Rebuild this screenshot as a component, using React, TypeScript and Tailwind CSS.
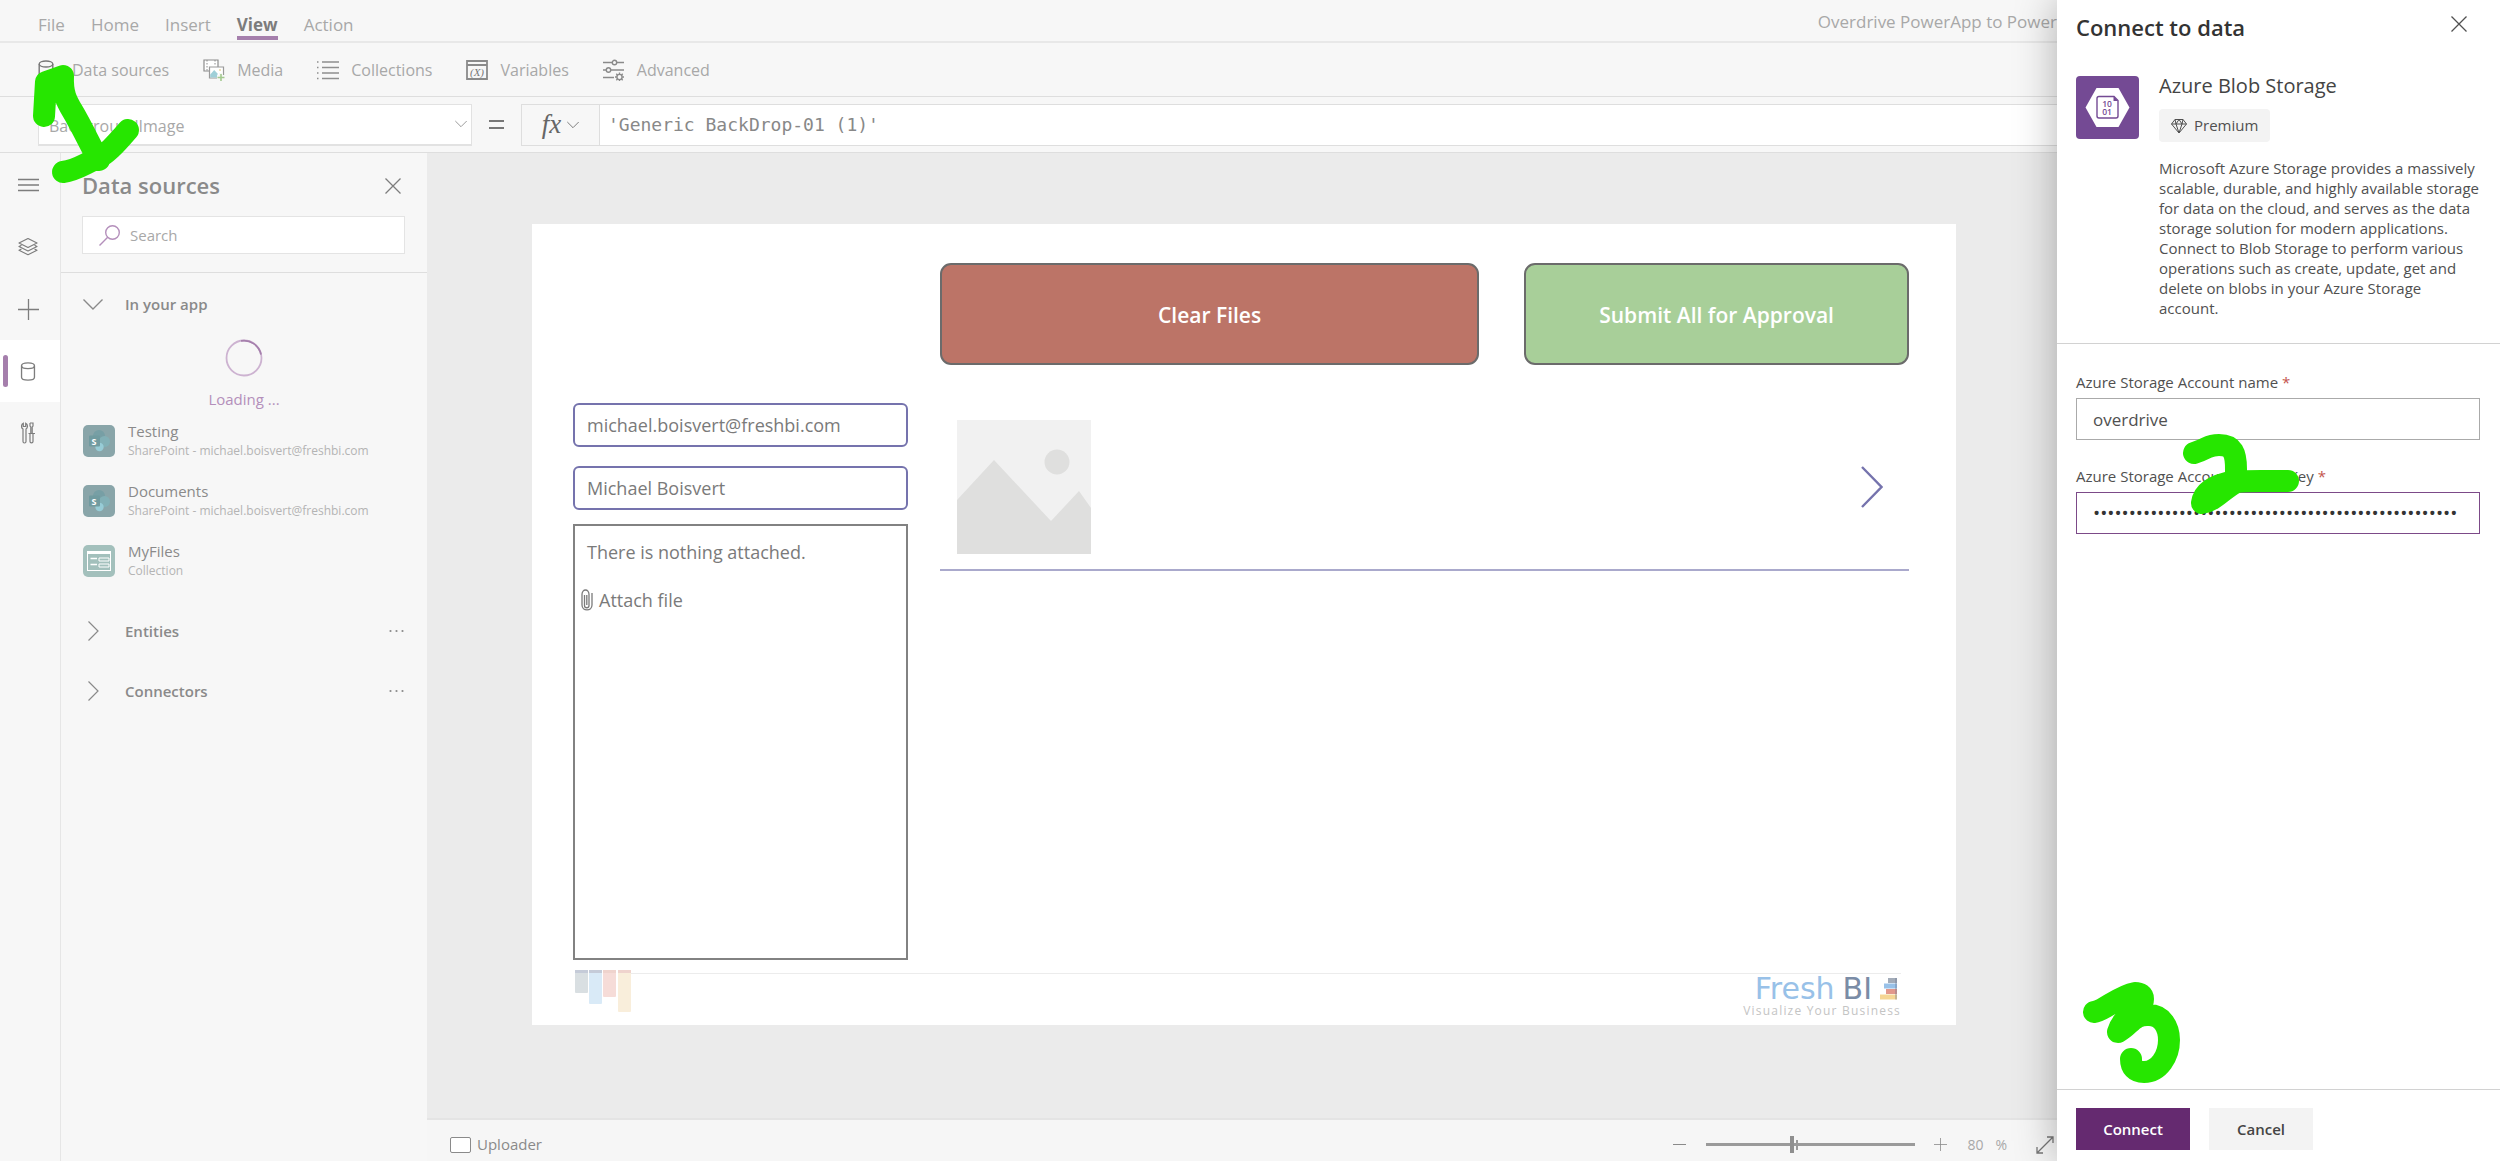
import React from 'react';

/**
 * Power Apps studio with the "Connect to data" drawer open.
 *
 * The studio (menu, toolbar, formula bar, data pane, canvas) takes the space
 * left of the drawer; green step marks 1-3 lie on top of it.
 */

interface IconProps {
  className?: string;
}

function CloseIcon({ className }: IconProps) {
  return (
    <svg className={className} viewBox="0 0 16 16" fill="none" stroke="currentColor" strokeWidth="1.3">
      <path d="M.5.5l15 15M15.5.5l-15 15" />
    </svg>
  );
}

function ChevronDown({ className }: IconProps) {
  return (
    <svg className={className} viewBox="0 0 20 11" fill="none" stroke="currentColor" strokeWidth="1.4">
      <path d="M.5.5L10 10 19.5.5" />
    </svg>
  );
}

function ChevronRight({ className }: IconProps) {
  return (
    <svg className={className} viewBox="0 0 11 20" fill="none" stroke="currentColor" strokeWidth="1.2">
      <path d="M.5.5L10 10 .5 19.5" />
    </svg>
  );
}

function DatabaseIcon({ className }: IconProps) {
  return (
    <svg className={className} viewBox="0 0 16 20" fill="none" stroke="currentColor" strokeWidth="1.4">
      <ellipse cx="8" cy="4" rx="6.8" ry="3" />
      <path d="M1.2 4v12c0 1.7 3 3 6.8 3s6.8-1.3 6.8-3V4" />
    </svg>
  );
}

function MediaIcon() {
  return (
    <svg className="h-[22px] w-[22px]" viewBox="0 0 22 22" fill="none">
      <path d="M1 1h14v11H1z" fill="#fff" stroke="#8c8c8c" strokeWidth="1.2" />
      <path d="M4 1v11M12 1v6" stroke="#8c8c8c" strokeDasharray="1.5 1.5" />
      <path d="M6.500 8h14v11h-14z" fill="#fff" stroke="#9a9a9a" strokeWidth="1.2" />
      <path d="M7.200 18.400v-3l4-4.400 3.300 3.600V18.400z" fill="#9fcfd8" />
      <circle cx="17" cy="11" r="1" fill="#e8d9a0" />
      <path d="M18 14v8M14 18h8" stroke="#f7f7f7" strokeWidth="4" />
      <path d="M18 15v7M14.500 18.500h7" stroke="#a3c98f" strokeWidth="1.600" />
    </svg>
  );
}

function CollectionsIcon() {
  return (
    <svg className="h-[22px] w-[22px]" viewBox="0 0 22 22" fill="none" stroke="#8f8f8f" strokeWidth="1.3">
      <path d="M5 3h17M5 8.500h17M5 14h17M5 19.500h17" />
      <path d="M0 3h1.500M0 8.500h1.500M0 14h1.500M0 19.500h1.500" />
    </svg>
  );
}

function VariablesIcon() {
  return (
    <svg className="h-[22px] w-[22px]" viewBox="0 0 22 22" fill="none" stroke="#8a8a8a">
      <path d="M1 2h20v18H1zM1 6h20" strokeWidth="1.800" />
      <text x="11" y="17" textAnchor="middle" fontSize="11" fontStyle="italic" fontFamily="Liberation Serif, serif" fill="#777" stroke="none">
        (X)
      </text>
    </svg>
  );
}

function AdvancedIcon() {
  return (
    <svg className="h-[22px] w-[22px]" viewBox="0 0 22 22" fill="none" stroke="#8a8a8a" strokeWidth="1.400">
      <path d="M0 3.500h9M14 3.500h7M0 11h3M8 11h13M0 18.500h11" />
      <circle cx="11.500" cy="3.500" r="2.200" />
      <circle cx="5.500" cy="11" r="2.200" />
      <circle cx="16.500" cy="18" r="2.600" />
      <path d="M16.500 13.500v9M12 18h9M13.300 14.800l6.400 6.400M19.700 14.800l-6.400 6.400" strokeDasharray="1.600 5.800" />
    </svg>
  );
}

function HamburgerIcon() {
  return (
    <svg className="h-5 w-[21px]" viewBox="0 0 21 20" stroke="currentColor" strokeWidth="1.300">
      <path d="M0 4.500h21M0 10h21M0 15.500h21" />
    </svg>
  );
}

function LayersIcon() {
  return (
    <svg className="h-5 w-5" viewBox="0 0 20 20" fill="none" stroke="currentColor" strokeWidth="1.200" strokeLinejoin="round">
      <path d="M10 1.500L19 6l-9 4.500L1 6z" />
      <path d="M3.500 8.300L1 9.500 10 14l9-4.500-2.500-1.200" />
      <path d="M3.500 12L1 13.200l9 4.500 9-4.500L16.500 12" />
    </svg>
  );
}

function PlusIcon({ className }: IconProps) {
  return (
    <svg className={className} viewBox="0 0 21 21" stroke="currentColor" strokeWidth="1.300">
      <path d="M10.500 0v21M0 10.500h21" />
    </svg>
  );
}

function ToolsIcon() {
  return (
    <svg className="h-[22px] w-[14px]" viewBox="0 0 14 22" fill="none" stroke="currentColor" strokeWidth="1.200">
      <path d="M2.300 1.200C0 2.200 0 6 2 7v12.500c0 2 3 2 3 0V7c2-1 2-4.800-.3-5.800V4.500H2.300z" />
      <path d="M9 1h3v3l-.8 1v6M9 1v3l.8 1v6M7.500 11.500H14M9 11.500v8c0 1.800 3 1.800 3 0v-8" />
    </svg>
  );
}

function SharePointIcon() {
  return (
    <svg className="h-8 w-8 shrink-0" viewBox="0 0 32 32">
      <rect width="32" height="32" rx="5" fill="#89a5a9" />
      <circle cx="16" cy="11" r="6" fill="#779fa5" />
      <circle cx="21.500" cy="16.500" r="5.500" fill="#82b0b6" />
      <circle cx="16.500" cy="22" r="4.200" fill="#97ccd6" />
      <rect x="6" y="10.500" width="11" height="11" rx="1" fill="#719ba0" />
      <text x="11" y="19.500" textAnchor="middle" fontSize="9" fontWeight="700" fontFamily="Open Sans, sans-serif" fill="#fff">
        S
      </text>
    </svg>
  );
}

function CollectionTile() {
  return (
    <svg className="h-8 w-8 shrink-0" viewBox="0 0 32 32" fill="none" stroke="#fff">
      <rect width="32" height="32" rx="5" fill="#a3c0bc" stroke="none" />
      <rect x="4.500" y="6.500" width="23" height="19" />
      <path d="M4 7.500h24" strokeWidth="3" />
      <path d="M7.500 13.500H14M7.500 19.500H14" strokeWidth="1.300" />
      <path d="M16 13h10v3H16zM16 19h10v3H16z" />
    </svg>
  );
}

function BlobIcon() {
  return (
    <svg className="h-[63px] w-[63px] shrink-0" viewBox="0 0 63 63">
      <rect width="63" height="63" rx="4" fill="#744a94" />
      <path d="M20.500 12h22L53.500 31.500 42.500 51h-22L9.500 31.500z" fill="#fff" />
      <path d="M23 20.500h15l4 4V40a2 2 0 0 1-2 2H23a2 2 0 0 1-2-2V22.500a2 2 0 0 1 2-2z" fill="none" stroke="#744a94" strokeWidth="1.400" />
      <path d="M37.500 20v5H42z" fill="#744a94" />
      <g fill="#744a94" fontFamily="Open Sans, sans-serif" fontSize="8.500" fontWeight="600" textAnchor="middle">
        <text x="31" y="30.500">10</text>
        <text x="31" y="39">01</text>
      </g>
    </svg>
  );
}

function DiamondIcon() {
  return (
    <svg className="h-4 w-4" viewBox="0 0 16 16" fill="none" stroke="currentColor" strokeLinejoin="round">
      <path d="M4 1.500h8L15.500 6 8 15 .5 6zM.5 6h15M4 1.500L5 6l3 9 3-9 1-4.500M5 6l3-4.500L11 6" />
    </svg>
  );
}

const MENU = ['File', 'Home', 'Insert', 'View', 'Action'];

const SOURCES = [
  { name: 'Testing', detail: 'SharePoint - michael.boisvert@freshbi.com', icon: <SharePointIcon /> },
  { name: 'Documents', detail: 'SharePoint - michael.boisvert@freshbi.com', icon: <SharePointIcon /> },
  { name: 'MyFiles', detail: 'Collection', icon: <CollectionTile /> },
];

function MenuBar() {
  return (
    <nav className="flex h-[43px] items-end border-b-2 border-[#e8e8e8] pb-px pl-[38px] text-[17px]">
      <div className="flex gap-[26px]">
        {MENU.map((item) => (
          <button
            key={item}
            className={
              item === 'View'
                ? 'border-b-4 border-[#a57fac] font-bold leading-[22px] text-[#7c7c7c]'
                : 'border-b-4 border-transparent leading-[22px]'
            }
          >
            {item}
          </button>
        ))}
      </div>
      <span className="mb-1 ml-auto leading-7 whitespace-nowrap">Overdrive PowerApp to Power</span>
    </nav>
  );
}

function Toolbar() {
  return (
    <div className="flex h-[54px] items-center gap-[34px] border-b border-[#dedede] pl-[38px] text-base">
      <button className="flex items-center gap-3">
        <span className="flex w-[22px]">
          <DatabaseIcon className="h-[22px] w-4 text-[#777]" />
        </span>
        Data sources
      </button>
      <button className="flex items-center gap-3"><MediaIcon />Media</button>
      <button className="flex items-center gap-3"><CollectionsIcon />Collections</button>
      <button className="flex items-center gap-3"><VariablesIcon />Variables</button>
      <button className="flex items-center gap-3"><AdvancedIcon />Advanced</button>
    </div>
  );
}

function FormulaBar() {
  return (
    <div className="flex h-14 items-center border-b border-[#dedede] pl-[38px]">
      <div className="relative">
        <select
          aria-label="Property"
          className="h-[42px] w-[434px] appearance-none border border-b-2 border-[#e2e2e2] bg-white pt-1 pl-2.5 text-base"
        >
          <option>BackgroundImage</option>
        </select>
        <ChevronDown className="pointer-events-none absolute top-4 right-[5px] h-2 w-3 text-[#888]" />
      </div>
      <span className="flex w-[49px] justify-center">
        <svg className="h-3 w-[15px]" viewBox="0 0 15 12" stroke="#777" strokeWidth="2">
          <path d="M0 2h15M0 9h15" />
        </svg>
      </span>
      <div className="flex h-[42px] flex-1 border border-r-0 border-[#dedede]">
        <button className="flex w-[78px] items-center justify-center gap-1.5 border-r border-[#dedede] font-['Liberation_Serif',serif] text-[27px] italic text-[#666]">
          fx
          <ChevronDown className="h-2 w-3" />
        </button>
        <input
          aria-label="Formula"
          defaultValue="'Generic BackDrop-01 (1)'"
          className="min-w-0 flex-1 bg-white pl-2 font-['DejaVu_Sans_Mono',monospace] text-[18px] text-[#888]"
        />
      </div>
    </div>
  );
}

function Rail() {
  return (
    <nav className="flex w-[61px] shrink-0 flex-col border-r border-[#e6e6e6] pt-px text-[#7d7d7d]">
      <button aria-label="Expand" className="flex h-[62px] items-center justify-center pr-1"><HamburgerIcon /></button>
      <button aria-label="Tree view" className="flex h-[62px] items-center justify-center pr-1"><LayersIcon /></button>
      <button aria-label="Insert" className="flex h-[62px] items-center justify-center pr-1"><PlusIcon className="h-[21px] w-[21px]" /></button>
      <button aria-label="Data" className="flex h-[62px] items-center bg-white pl-[3px]">
        <span className="h-8 w-[5px] rounded-full bg-[#a57fac]" />
        <DatabaseIcon className="ml-3 h-[19px] w-4" />
      </button>
      <button aria-label="Advanced tools" className="flex h-[62px] items-center justify-center pr-1"><ToolsIcon /></button>
    </nav>
  );
}

function CollapsedGroup({ label }: { label: string }) {
  return (
    <div className="flex h-[60px] items-center pr-[23px] pl-[27px]">
      <button className="flex items-center gap-[26px] text-[15px] font-semibold text-[#8a8a8a]">
        <ChevronRight className="h-5 w-[11px]" />
        {label}
      </button>
      <button aria-label={`${label} options`} className="ml-auto text-[#8a8a8a]">
        <svg className="h-1 w-[15px]" viewBox="0 0 15 4" fill="currentColor">
          <circle cx="1.500" cy="2" r="1.100" />
          <circle cx="7.500" cy="2" r="1.100" />
          <circle cx="13.500" cy="2" r="1.100" />
        </svg>
      </button>
    </div>
  );
}

function DataPane() {
  return (
    <section className="w-[366px] shrink-0">
      <div className="border-b border-[#dedede] pr-[22px] pb-[18px] pl-[21px]">
        <div className="flex h-[63px] items-center justify-between pt-0.5 pr-1">
          <h2 className="text-[22px] font-semibold text-[#8a8a8a]">Data sources</h2>
          <button aria-label="Close data sources"><CloseIcon className="h-4 w-4 text-[#7d7d7d]" /></button>
        </div>
        <label className="flex h-[38px] items-center gap-2.5 border border-[#e4e4e4] bg-white pl-4">
          <svg className="h-[21px] w-[21px] shrink-0" viewBox="0 0 21 21" fill="none" stroke="#b48fbb" strokeWidth="1.400">
            <circle cx="13.500" cy="7.500" r="6.800" />
            <path d="M8.700 12.300L.5 20.500" />
          </svg>
          <input type="search" placeholder="Search" aria-label="Search" className="min-w-0 flex-1 text-[15px] placeholder:text-[#a8a8a8]" />
        </label>
      </div>

      <button className="flex h-[62px] items-center gap-[22px] pl-[22px] text-[15px] font-semibold text-[#8a8a8a]">
        <ChevronDown className="h-[11px] w-5" />
        In your app
      </button>

      <div className="flex flex-col items-center pt-1 text-[15px] leading-5 text-[#b48fbb]">
        <svg className="mb-3 h-[38px] w-[38px]" viewBox="0 0 38 38" fill="none" strokeWidth="1.800">
          <circle cx="19" cy="19" r="17.500" stroke="#cdb3d1" />
          <path d="M16 1.800A17.500 17.500 0 0 1 36 15.500" stroke="#a57fac" />
        </svg>
        Loading ...
      </div>

      <ul className="mt-3 flex flex-col gap-5 pl-[22px]">
        {SOURCES.map((source) => (
          <li key={source.name} className="flex h-10 items-center gap-[13px]">
            {source.icon}
            <div>
              <p className="text-[15px] leading-[19px] text-[#8a8a8a]">{source.name}</p>
              <p className="text-xs leading-[19px] text-[#b4b4b4]">{source.detail}</p>
            </div>
          </li>
        ))}
      </ul>

      <div className="mt-5">
        <CollapsedGroup label="Entities" />
        <CollapsedGroup label="Connectors" />
      </div>
    </section>
  );
}

function FreshBiLogo() {
  return (
    <div className="flex flex-col items-end">
      <div className="flex items-center gap-2 font-['DejaVu_Sans'] text-[30px] leading-[30px]">
        <span className="text-[#98c1e8]">Fresh</span>
        <span className="text-[#7a8ca6]">BI</span>
        <svg className="mr-1 h-[22px] w-[17px]" viewBox="0 0 17 22">
          <path d="M8 0h9v5H8z" fill="#a3acb9" />
          <path d="M4 5.500h13v5H4z" fill="#98c1e8" />
          <path d="M6 11h11v5H6z" fill="#e2988c" />
          <path d="M0 16.500h17v5H0z" fill="#f5d694" />
          <path d="M15 0h2v21.500h-2z" fill="#6b7690" opacity=".35" />
        </svg>
      </div>
      <p className="text-xs leading-[14px] tracking-widest text-[#c4c4c4]">Visualize Your Business</p>
    </div>
  );
}

function AppScreen() {
  return (
    <div className="flex h-[801px] flex-col bg-white pr-[47px] pl-[41px] text-lg text-[#7a7a7a]">
      <div className="flex gap-8">
        <div className="flex w-[335px] shrink-0 flex-col pt-[179px]">
          <input
            aria-label="Email"
            defaultValue="michael.boisvert@freshbi.com"
            className="mb-[19px] h-11 rounded-md border-2 border-[#7573ad] px-3"
          />
          <input
            aria-label="Name"
            defaultValue="Michael Boisvert"
            className="mb-3.5 h-11 rounded-md border-2 border-[#7573ad] px-3"
          />
          <div className="h-[436px] border-2 border-[#828282] px-1.5 pt-3">
            <p className="pl-1.5 leading-7">There is nothing attached.</p>
            <button className="mt-5 flex items-center gap-1.5 leading-7">
              <svg className="h-[22px] w-3" viewBox="0 0 12 22" fill="none" stroke="currentColor" strokeWidth="1.300">
                <path d="M3.500 6v10.500c0 3 4.500 3 4.500 0V5.500c0-6-7-6-7 0V16c0 6.500 10 6.500 10 0V4" />
                <path d="M5.800 6v10" />
              </svg>
              Attach file
            </button>
          </div>
        </div>

        <div className="flex-1 pt-[39px]">
          <div className="flex gap-[45px] text-[21px] font-semibold text-white">
            <button className="h-[102px] flex-[541] rounded-[11px] border-2 border-[#6b6b6b] bg-[#bc7467] pt-0.5">Clear Files</button>
            <button className="h-[102px] flex-[385] rounded-[11px] border-2 border-[#6b6b6b] bg-[#a8cf99] pt-0.5">Submit All for Approval</button>
          </div>
          <div className="mt-[55px] flex items-center justify-between border-b-2 border-[#aaa9cc] pr-[26px] pb-[15px] pl-[17px]">
            <svg className="h-[134px] w-[134px]" viewBox="0 0 134 134">
              <path d="M0 0h134v134H0z" fill="#f1f1f1" />
              <circle cx="100" cy="42" r="12.500" fill="#dfdfde" />
              <path d="M0 80l37-40 57 61 28-30 12 17v46H0z" fill="#dfdfde" />
            </svg>
            <button aria-label="Open item">
              <svg className="h-[42px] w-[22px]" viewBox="0 0 22 42" fill="none" stroke="#7573ad" strokeWidth="2.400">
                <path d="M1 1l19.500 20L1 41" />
              </svg>
            </button>
          </div>
        </div>
      </div>

      <footer className="flex pt-2.5">
        <svg className="ml-0.5 h-[42px] w-14" viewBox="0 0 56 42">
          <rect width="13" height="23" rx="1" fill="#d9dfe2" />
          <rect x="14" width="13" height="34" rx="1" fill="#d9eaf7" />
          <rect x="28" width="13" height="27" rx="1" fill="#f6dcd8" />
          <rect x="43" width="13" height="42" rx="1" fill="#f9eedb" />
          <path d="M0 0h13v3H0zM14 0h13v3H14z" fill="#c5cbd8" />
          <path d="M28 0h13v3H28zM43 0h13v3H43z" fill="#efd3cd" />
        </svg>
        <div className="mt-[3px] mr-2 flex flex-1 justify-end border-t border-[#ececec]">
          <FreshBiLogo />
        </div>
      </footer>
    </div>
  );
}

function StatusBar() {
  return (
    <footer className="flex h-[43px] shrink-0 items-center border-t-2 border-[#e4e4e4] bg-[#f6f6f6] pt-2 pr-[3px] pl-[23px] text-[15px] text-[#8a8a8a]">
      <span className="mr-1.5 h-4 w-[21px] rounded-xs border border-[#8a8a8a] bg-white" />
      Uploader
      <div className="ml-auto flex items-center">
        <button aria-label="Zoom out">
          <svg className="h-[13px] w-[13px]" viewBox="0 0 13 13" stroke="currentColor"><path d="M0 6.500h13" /></svg>
        </button>
        <div className="relative mr-[19px] ml-5 flex h-5 w-[209px] items-center">
          <input
            type="range"
            aria-label="Zoom"
            defaultValue="41"
            className="w-full appearance-none bg-transparent [&::-webkit-slider-runnable-track]:h-[3px] [&::-webkit-slider-runnable-track]:bg-[#9a9a9a] [&::-webkit-slider-thumb]:-mt-[7px] [&::-webkit-slider-thumb]:h-[17px] [&::-webkit-slider-thumb]:w-1 [&::-webkit-slider-thumb]:appearance-none [&::-webkit-slider-thumb]:bg-[#8f8f8f]"
          />
          <span className="absolute top-[5px] left-[90px] h-2.5 w-0.5 bg-[#9a9a9a]" />
        </div>
        <button aria-label="Zoom in"><PlusIcon className="h-[13px] w-[13px]" /></button>
        <span className="ml-5 flex gap-3 text-sm text-[#a8a8a8]"><span>80</span><span>%</span></span>
        <button aria-label="Fit to window" className="ml-[29px]">
          <svg className="h-[18px] w-[18px]" viewBox="0 0 18 18" fill="none" stroke="#777" strokeWidth="1.300">
            <path d="M1 17L17 1M11 1h6v6M1 11v6h6" />
          </svg>
        </button>
      </div>
    </footer>
  );
}

function ConnectDrawer() {
  return (
    <aside className="relative flex w-[443px] shrink-0 flex-col bg-white text-[#505050] shadow-[0_0_40px_rgba(0,0,0,0.3)]">
      <header className="flex items-start justify-between py-[11px] pr-[33px] pl-[19px]">
        <h1 className="text-[22px] leading-8 font-semibold text-[#333]">Connect to data</h1>
        <button aria-label="Close" className="pt-[5px]"><CloseIcon className="h-4 w-4" /></button>
      </header>

      <section className="flex gap-5 border-b border-[#d2d2d2] pt-[22px] pr-4 pb-[25px] pl-[19px]">
        <BlobIcon />
        <div>
          <h2 className="text-[20px] leading-5 text-[#444]">Azure Blob Storage</h2>
          <span className="mt-[13px] inline-flex h-[33px] items-center gap-[7px] rounded-sm bg-[#f3f3f3] px-3 text-[15px]">
            <DiamondIcon />
            Premium
          </span>
          <p className="mt-4 text-[15px] leading-5">
            Microsoft Azure Storage provides a massively scalable, durable, and highly available storage for data on
            the cloud, and serves as the data storage solution for modern applications. Connect to Blob Storage to
            perform various operations such as create, update, get and delete on blobs in your Azure Storage account.
          </p>
        </div>
      </section>

      <form id="connection" className="flex flex-1 flex-col pt-7 pr-5 pl-[19px]">
        <label htmlFor="account-name" className="text-[15px] leading-5">
          Azure Storage Account name <span className="text-[#c4554d]">*</span>
        </label>
        <input
          id="account-name"
          defaultValue="overdrive"
          className="mt-1.5 h-[42px] border border-[#aaa] px-4 text-[17px]"
        />
        <label htmlFor="access-key" className="mt-[26px] text-[15px] leading-5">
          Azure Storage Account Access Key <span className="text-[#c4554d]">*</span>
        </label>
        <input
          id="access-key"
          type="password"
          defaultValue="000000000000000000000000000000000000000000000000000"
          className="mt-1.5 h-[42px] border border-[#7c4a88] px-4 text-[19px] text-[#333] outline-none"
        />
      </form>

      <footer className="flex gap-[19px] border-t border-[#d2d2d2] px-[19px] pt-[18px] pb-[11px] text-[15px] font-semibold">
        <button form="connection" type="submit" className="h-[42px] w-[114px] bg-[#652a70] text-white">Connect</button>
        <button className="h-[42px] w-[104px] bg-[#f3f3f3] text-[#444]">Cancel</button>
      </footer>

      {/* Step marks 2 and 3 */}
      <svg className="pointer-events-none absolute top-[430px] left-[120px] h-[90px] w-[130px]" viewBox="0 0 130 90" fill="none" stroke="#26e600" strokeWidth="22" strokeLinecap="round" strokeLinejoin="round">
        <path d="M17 23c16-5 13-8 25-8 14 0 17 8 17 24v12C46 53 27 58 25 73 38 71 48 57 60 52 66 51 72 51 84 51h27" />
      </svg>
      <svg className="pointer-events-none absolute bottom-[70px] left-[20px] h-[120px] w-[110px]" viewBox="0 0 110 120" fill="none" stroke="#26e600" strokeWidth="22" strokeLinecap="round" strokeLinejoin="round">
        <path d="M17 41c10-1 24-16 41-19 5 0 8 2 8 6 0 12-20 15-25 33 13-7 15-18 31-17 13 0 20 12 20 25 0 16-10 32-25 32-9 0-13-5-13-13" />
      </svg>
    </aside>
  );
}

export default function App() {
  return (
    <div className="relative flex min-h-screen overflow-hidden bg-[#f7f7f7] font-['Open_Sans','Noto_Sans',sans-serif] text-[#a8a8a8]">
      <div className="flex min-w-0 flex-1 flex-col">
        <MenuBar />
        <Toolbar />
        <FormulaBar />
        <div className="flex flex-1">
          <Rail />
          <DataPane />
          <main className="flex min-w-0 flex-1 flex-col">
            <div className="flex-1 bg-[#ebebeb] pt-[71px] pr-[101px] pl-[105px]">
              <AppScreen />
            </div>
            <StatusBar />
          </main>
        </div>
      </div>
      <ConnectDrawer />

      {/* Step mark 1 */}
      <svg className="pointer-events-none absolute top-[60px] left-[30px] h-[130px] w-[120px]" viewBox="0 0 120 130" fill="none" stroke="#26e600" strokeWidth="22" strokeLinecap="round" strokeLinejoin="round">
        <path d="M14 56l2-34 17-6c-1 22 6 28 14 43 10 18 14 28 22 41M33 112c14-2 21-8 33-13 10-4 19-14 32-29" />
      </svg>
    </div>
  );
}
